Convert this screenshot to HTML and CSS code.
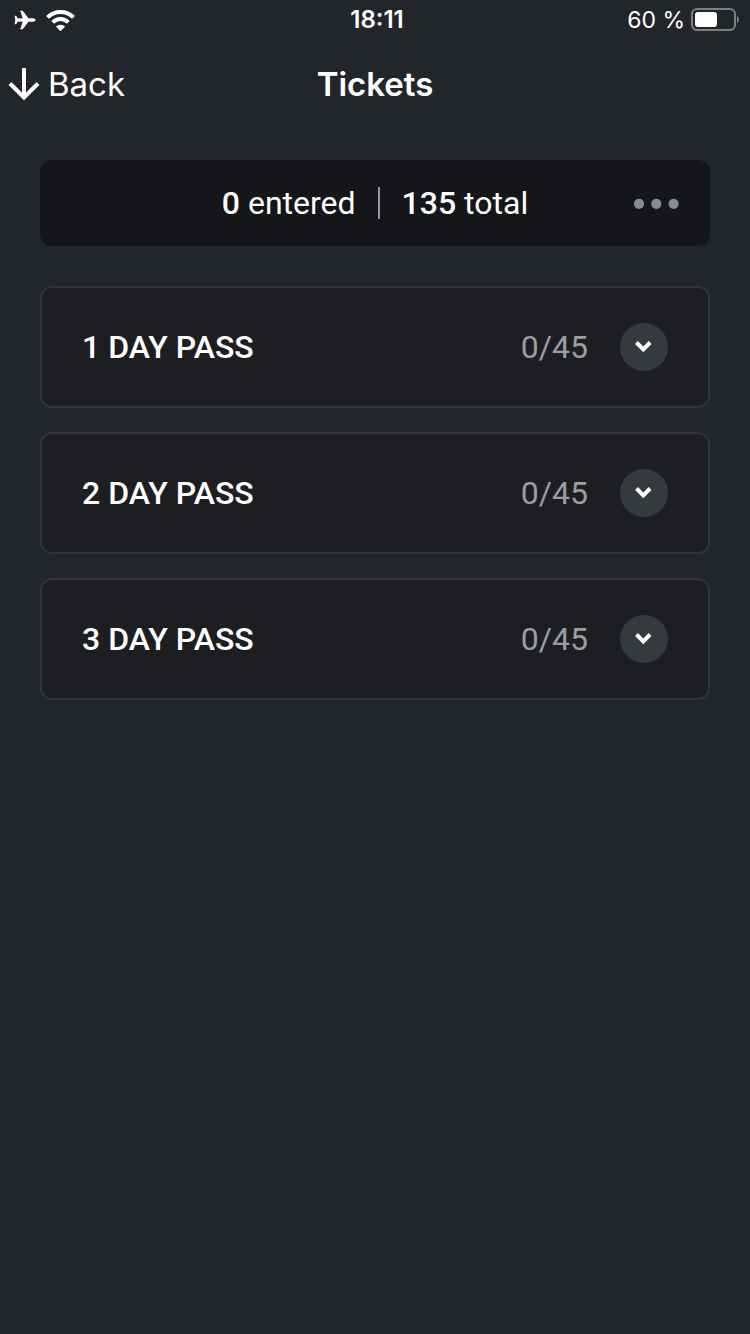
FILE: index.html
```html
<!DOCTYPE html>
<html lang="en">
<head>
  <meta charset="utf-8">
  <meta name="viewport" content="width=device-width, initial-scale=1">
  <title>Tickets</title>
  <link rel="stylesheet" href="styles.css">
</head>
<body>
  <!-- Status bar -->
  <div class="status-bar">
    <div class="status-left">
      <svg width="22" height="20" viewBox="0 0 22 20" aria-hidden="true">
        <path d="M21.500 10c0 .9-1 1.700-2.400 1.700h-4.600L8.700 19.300H6.200l2.500-7.600-4.700-.3-2 2.900H.6L1.300 10 .6 5.700H2l2 2.900 4.700-.3L6.200.7h2.500l5.800 7.600h4.600c1.400 0 2.400.8 2.400 1.700z" fill="#fff"/>
      </svg>
      <svg width="30" height="23" viewBox="0 0 30 23" aria-hidden="true">
        <path d="M1.500 8.300a18.500 18.500 0 0 1 26 0M6.700 13.300a11 11 0 0 1 15.600 0" fill="none" stroke="#fff" stroke-width="4"/>
        <path d="M14.500 22.300l-4.600-4.700a6.600 6.600 0 0 1 9.200 0z" fill="#fff"/>
      </svg>
    </div>
    <div class="clock">18:11</div>
    <div class="status-right">
      <span>60 %</span>
      <svg width="49" height="24" viewBox="0 0 49 24" aria-hidden="true">
        <rect x="1" y="1" width="43" height="21" rx="5" fill="none" stroke="#7d8083" stroke-width="2"/>
        <rect x="4" y="4" width="22" height="15" rx="3" fill="#fff"/>
        <path d="M46 8c2.500 1 2.500 6 0 7z" fill="#7d8083"/>
      </svg>
    </div>
  </div>

  <!-- Header -->
  <header class="nav">
    <button class="back-btn" type="button">
      <svg width="32" height="34" viewBox="0 0 32 34" aria-hidden="true">
        <path d="M16 1v29M2 16.500l14 14 14-14" fill="none" stroke="#fff" stroke-width="4"/>
      </svg>
      Back
    </button>
    <h1>Tickets</h1>
  </header>

  <main>
    <div class="summary">
      <div class="totals">
        <span><b>0</b> entered</span>
        <span class="divider"></span>
        <span><b>135</b> total</span>
      </div>
      <button class="more-btn" type="button" aria-label="More">
        <svg width="46" height="12" viewBox="0 0 46 12" aria-hidden="true">
          <g fill="#878b93">
            <circle cx="5" cy="6.800" r="5.100"/>
            <circle cx="22.300" cy="6.800" r="5.100"/>
            <circle cx="39.600" cy="6.800" r="5.100"/>
          </g>
        </svg>
      </button>
    </div>

    <!-- Ticket types -->
    <ul class="tickets">
      <li class="ticket">
        <h2>1 DAY PASS</h2>
        <span class="count">0/45</span>
        <button class="toggle" type="button" aria-label="Show 1 day pass">
          <svg width="18" height="12" viewBox="0 0 18 12" aria-hidden="true"><path d="M1.500 1.500L8.300 8.300l6.800-6.800"/></svg>
        </button>
      </li>
      <li class="ticket">
        <h2>2 DAY PASS</h2>
        <span class="count">0/45</span>
        <button class="toggle" type="button" aria-label="Show 2 day pass">
          <svg width="18" height="12" viewBox="0 0 18 12" aria-hidden="true"><path d="M1.500 1.500L8.300 8.300l6.800-6.800"/></svg>
        </button>
      </li>
      <li class="ticket">
        <h2>3 DAY PASS</h2>
        <span class="count">0/45</span>
        <button class="toggle" type="button" aria-label="Show 3 day pass">
          <svg width="18" height="12" viewBox="0 0 18 12" aria-hidden="true"><path d="M1.500 1.500L8.300 8.300l6.800-6.800"/></svg>
        </button>
      </li>
    </ul>
  </main>
</body>
</html>
```

FILE: styles.css
```css
* {
  box-sizing: border-box;
}

body {
  margin: 0;
  min-height: 100vh;
  background: #22262a;
  color: #fff;
  font-family: Roboto, sans-serif;
  font-size: 32px;
  line-height: 38px;
}

button {
  padding: 0;
  border: none;
  background: none;
  color: inherit;
  font: inherit;
  cursor: pointer;
}

svg {
  display: block;
  overflow: visible;
}

/* status bar */
.status-bar {
  display: grid;
  grid-template-columns: 1fr auto 1fr;
  align-items: center;
  height: 40px;
  padding: 0 10px 0 14px;
  font-family: Inter, sans-serif;
  font-size: 23px;
}

.status-left {
  display: flex;
  align-items: center;
  gap: 10px;
}

.clock {
  font-size: 24px;
  font-weight: 600;
}

.status-right {
  display: flex;
  align-items: center;
  justify-content: flex-end;
  gap: 6px;
}

/* header */
.nav {
  display: grid;
  grid-template-columns: 1fr auto 1fr;
  align-items: center;
  height: 88px;
  padding: 0 8px;
  font-family: Inter, sans-serif;
  font-size: 33px;
}

.back-btn {
  display: flex;
  align-items: center;
  gap: 8px;
}

.nav h1 {
  margin: 0;
  font-size: 33px;
  font-weight: 600;
}

main {
  padding: 32px 40px;
}

.summary {
  display: grid;
  grid-template-columns: 1fr auto 1fr;
  align-items: center;
  height: 86px;
  padding: 0 30px;
  border-radius: 12px;
  background: #151619;
}

.totals {
  grid-column: 2;
  display: flex;
  align-items: center;
  gap: 22px;
}

.totals b {
  font-weight: 500;
}

.divider {
  width: 2px;
  height: 32px;
  background: #96979b;
}

.more-btn {
  justify-self: end;
}

/* ticket list */
.tickets {
  display: flex;
  flex-direction: column;
  gap: 24px;
  margin: 40px 0 0;
  padding: 0;
  list-style: none;
}

.ticket {
  display: flex;
  align-items: center;
  height: 122px;
  padding: 0 40px;
  border: 2px solid #303337;
  border-radius: 12px;
  background: #1d1e21;
}

.ticket h2 {
  flex: 1;
  margin: 0;
  font-size: 32px;
  font-weight: 500;
}

.count {
  margin-right: 32px;
  color: #9b9da1;
}

.toggle {
  display: flex;
  align-items: center;
  justify-content: center;
  width: 48px;
  height: 48px;
  border-radius: 50%;
  background: #343b3f;
}

.toggle path {
  fill: none;
  stroke: #fff;
  stroke-width: 4;
}
```
